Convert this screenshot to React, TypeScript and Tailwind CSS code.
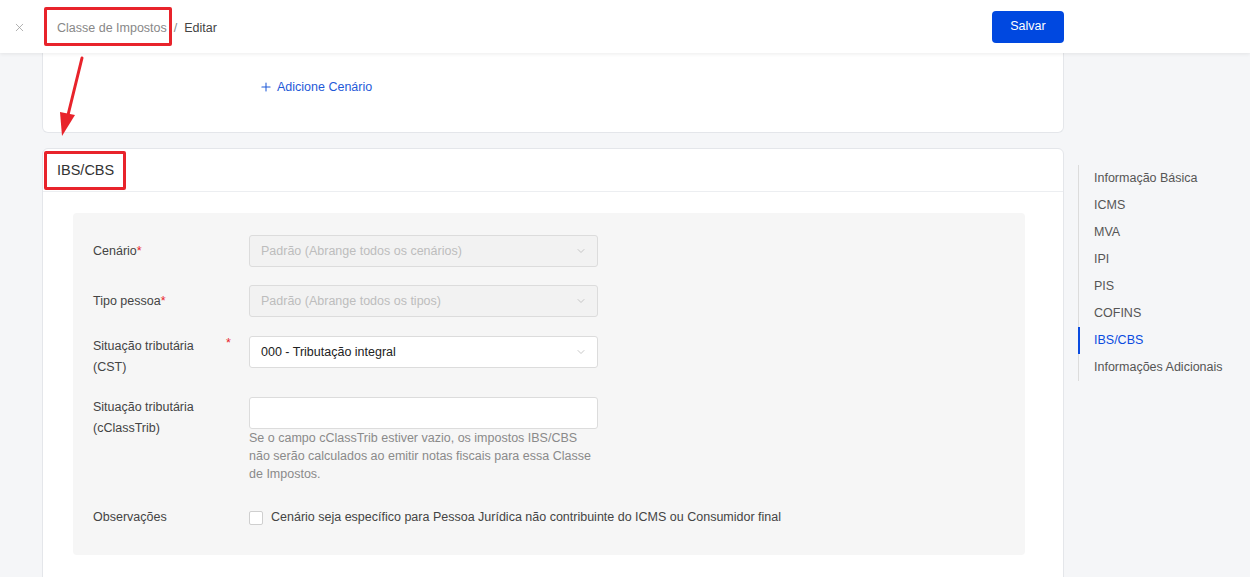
import { ChevronDown, Plus, X } from 'lucide-react';

const navItems = [
  'Informação Básica',
  'ICMS',
  'MVA',
  'IPI',
  'PIS',
  'COFINS',
  'IBS/CBS',
  'Informações Adicionais',
];

function Select({ value, disabled }: { value: string; disabled?: boolean }) {
  return (
    <div
      className={`flex h-[32px] w-[349px] items-center justify-between rounded-[3px] border border-[#dcdcdc] pl-[11px] pr-[10px] ${
        disabled ? 'bg-[#f2f2f2] text-[#bdbdbd]' : 'bg-white text-[#222]'
      }`}
    >
      <span>{value}</span>
      <ChevronDown className="h-[12px] w-[12px] text-[#b5b5b5]" strokeWidth={1.5} />
    </div>
  );
}

function Req() {
  return <span className="text-[#e8232b]">*</span>;
}

export default function App() {
  return (
    <div
      className="relative h-[577px] w-[1250px] overflow-hidden bg-[#f5f6f8] text-[12.5px] text-[#444]"
      style={{ fontFamily: '"Liberation Sans", Arial, sans-serif' }}
    >
      {/* Header */}
      <div className="relative z-10 flex h-[53px] items-center bg-white shadow-[0_1px_4px_rgba(0,0,0,0.08)]">
        <div className="flex w-[57px] justify-start pl-[13px] pt-[1px]">
          <X className="h-[13px] w-[13px] text-[#999]" strokeWidth={1.4} />
        </div>
        <div className="mt-[3px] flex items-center">
          <span className="text-[#888]">Classe de Impostos</span>
          <span className="mx-[7px] text-[#888]">/</span>
          <span className="text-[#444]">Editar</span>
        </div>
        <div className="ml-auto mr-[186px]">
          <button className="h-[32px] w-[72px] rounded-[4px] bg-[#0048e0] text-[12.5px] font-medium text-white">
            Salvar
          </button>
        </div>
      </div>

      <div className="flex pl-[42px]">
        <div className="w-[1022px]">
          {/* Card 1 (scrolled) */}
          <div className="flex h-[80px] items-start rounded-b-[6px] border-x border-b border-[#e4e6ea] bg-white pl-[216px] pt-[25px]">
            <span className="flex items-center gap-[4px] text-[#1f5ad8]">
              <Plus className="h-[14px] w-[14px]" strokeWidth={1.8} />
              Adicione Cenário
            </span>
          </div>

          {/* Card 2 */}
          <div className="mt-[15px] h-[500px] rounded-t-[6px] border border-[#e4e6ea] bg-white">
            <div className="flex h-[43px] items-center border-b border-[#eceef1] pl-[14px] pt-[1px] text-[14.5px] text-[#333]">
              IBS/CBS
            </div>
            <div className="ml-[30px] mr-[38px] mt-[21px] rounded-[4px] bg-[#f6f6f6] pb-[27px] pl-[20px] pt-[22px]">
              <div className="flex h-[32px] items-center">
                <div className="w-[156px]">
                  Cenário<Req />
                </div>
                <Select value="Padrão (Abrange todos os cenários)" disabled />
              </div>
              <div className="mt-[18px] flex h-[32px] items-center">
                <div className="w-[156px]">
                  Tipo pessoa<Req />
                </div>
                <Select value="Padrão (Abrange todos os tipos)" disabled />
              </div>
              <div className="mt-[19px] flex h-[42px] items-start">
                <div className="relative w-[156px] leading-[21px]">
                  Situação tributária
                  <br />
                  (CST)
                  <span className="absolute left-[133px] top-[-3px] text-[#e8232b]">*</span>
                </div>
                <Select value="000 - Tributação integral" />
              </div>
              <div className="mt-[19px] flex items-start">
                <div className="w-[156px] leading-[21px]">
                  Situação tributária
                  <br />
                  (cClassTrib)
                </div>
                <div>
                  <div className="h-[32px] w-[349px] rounded-[3px] border border-[#dcdcdc] bg-white" />
                  <p className="w-[349px] leading-[18px] text-[#8a8a8a]">
                    Se o campo cClassTrib estiver vazio, os impostos IBS/CBS não serão calculados ao
                    emitir notas fiscais para essa Classe de Impostos.
                  </p>
                </div>
              </div>
              <div className="mt-[24px] flex h-[21px] items-center">
                <div className="w-[156px]">Observações</div>
                <span className="h-[14px] w-[14px] rounded-[2px] border border-[#cfcfcf] bg-white" />
                <span className="ml-[8px]">
                  Cenário seja específico para Pessoa Jurídica não contribuinte do ICMS ou Consumidor final
                </span>
              </div>
            </div>
          </div>
        </div>

        {/* Right anchor nav */}
        <div className="ml-[14px] mt-[112px] h-[216px] border-l border-[#dcdcdc]">
          {navItems.map((item) => (
            <div
              key={item}
              className={`-ml-px flex h-[27px] items-center border-l-2 pl-[14px] ${
                item === 'IBS/CBS' ? 'border-[#0a4be0] text-[#0a4be0]' : 'border-transparent text-[#555]'
              }`}
            >
              {item}
            </div>
          ))}
        </div>
      </div>

      {/* Annotations */}
      <div className="absolute left-[44px] top-[7px] z-20 h-[39px] w-[128px] rounded-[2px] border-[3px] border-[#e8232b]" />
      <div className="absolute left-[44px] top-[151px] z-20 h-[39px] w-[82px] rounded-[2px] border-[3px] border-[#e8232b]" />
      <svg className="absolute left-[50px] top-[55px] z-20" width="40" height="85" viewBox="0 0 40 85">
        <path d="M32 3 L18 60" stroke="#e8232b" strokeWidth="3" strokeLinecap="round" />
        <path d="M12 81 L25 60 L10 57 Z" fill="#e8232b" />
      </svg>
    </div>
  );
}
